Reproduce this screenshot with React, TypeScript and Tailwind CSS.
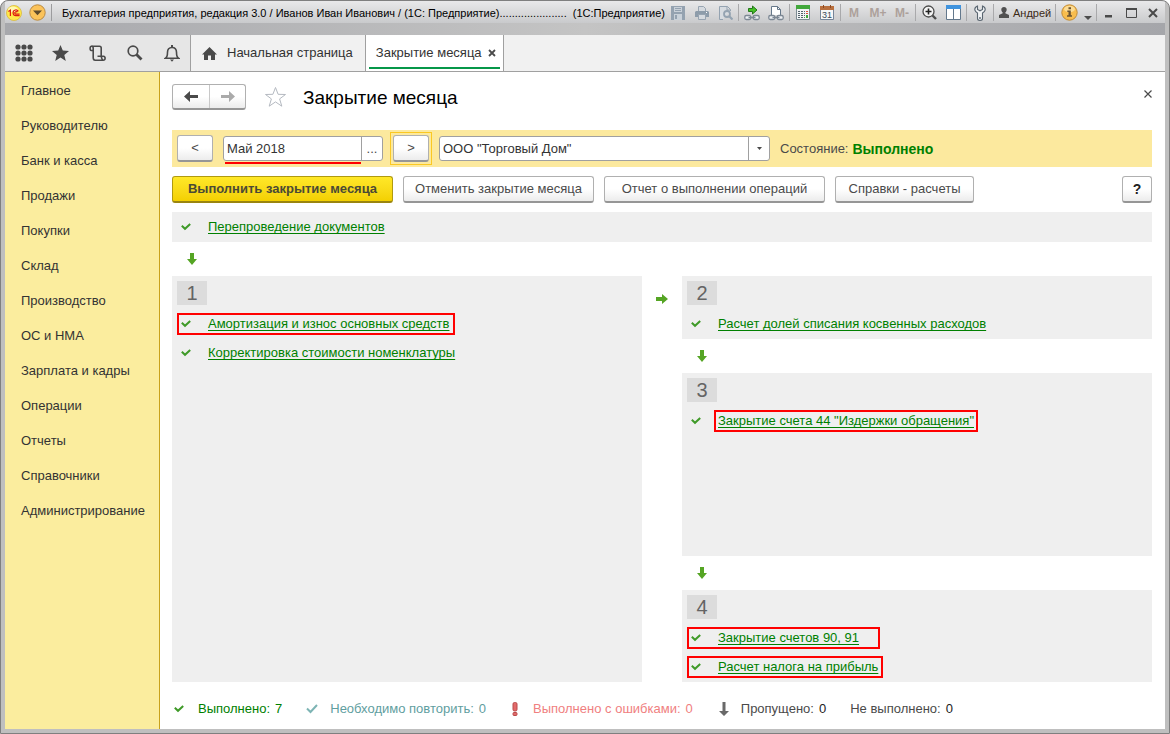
import type { ReactNode } from "react";
import { clsx } from "clsx";

const sections = [
    "Главное",
    "Руководителю",
    "Банк и касса",
    "Продажи",
    "Покупки",
    "Склад",
    "Производство",
    "ОС и НМА",
    "Зарплата и кадры",
    "Операции",
    "Отчеты",
    "Справочники",
    "Администрирование",
];

function Check({ color = "#3f9a28" }: { color?: string }) {
    return (
        <svg width="10" height="8" viewBox="0 0 10 8" fill="none" className="shrink-0">
            <path d="M0.8 2.8 L4 5.8 L9.2 1" stroke={color} strokeWidth="2" />
        </svg>
    );
}

function DownArrow() {
    return (
        <svg width="10" height="12" viewBox="0 0 10 12" className="shrink-0">
            <path d="M3 0h4v6h3L5 12 0 6h3z" fill="#55a524" />
        </svg>
    );
}

function RightArrow() {
    return (
        <svg width="12" height="10" viewBox="0 0 12 10" className="shrink-0">
            <path d="M0 3v4h6v3l6-5-6-5v3z" fill="#55a524" />
        </svg>
    );
}

/* ---------- window caption ---------- */

function Group({ children }: { children: ReactNode }) {
    return <div className="flex h-full shrink-0 items-center border-l border-[#a9a9ab] px-px">{children}</div>;
}

function Tool({ label, children }: { label: string; children: ReactNode }) {
    return (
        <button type="button" aria-label={label} className="flex h-5 w-6 items-center justify-center">
            {children}
        </button>
    );
}

function MemoryButton({ text }: { text: string }) {
    return (
        <button type="button" className="h-5 w-6 text-[12px] leading-5 font-bold text-[#ada19b]">
            {text}
        </button>
    );
}

function ChainLink() {
    return (
        <g fill="none" stroke="#7d8894" strokeWidth="1.3">
            <rect x="0.8" y="10.5" width="6" height="4" rx="1.5" fill="#eef1f4" />
            <rect x="9.2" y="10.5" width="6" height="4" rx="1.5" fill="#eef1f4" />
            <path d="M4.5 12.5h7" />
        </g>
    );
}

function TitleBar() {
    return (
        <header className="bg-linear-to-r from-[#a7a8ac] via-[#c4c4c4] to-[#a5a6aa] pb-3">
            <div className="flex h-[22px] items-center bg-linear-to-b from-[#e9e9ea] to-[#c9cacc] pt-px">
                <svg width="16" height="16" viewBox="0 0 16 16" className="ml-px shrink-0">
                    <circle cx="8" cy="8" r="7.5" fill="#ffe94a" stroke="#d9b93a" strokeWidth="0.8" />
                    <ellipse cx="7" cy="4.5" rx="5" ry="3" fill="#fff8b0" />
                    <path
                        d="M2.4 6.6L4.4 5.2V11M12.3 6.4C11.6 5.2 10.4 4.8 9.4 5C7.8 5.3 6.9 6.6 7.1 8.2C7.3 9.7 8.4 10.6 9.8 10.6H13.6M11.3 7.2C10.8 6.6 9.9 6.4 9.3 6.9C8.5 7.5 8.6 8.9 9.7 9.1H13.6"
                        fill="none"
                        stroke="#dd1c12"
                        strokeWidth="1.2"
                    />
                </svg>
                <button type="button" aria-label="Главное меню" className="ml-[7px] shrink-0">
                    <svg width="17" height="17" viewBox="0 0 17 17">
                        <circle cx="8.5" cy="8.5" r="7.7" fill="#fbc35a" stroke="#ba8a41" />
                        <path d="M4 6.5h9l-4.5 4.8z" fill="#5e4a2c" />
                    </svg>
                </button>
                <div className="ml-[5px] h-[17px] w-px shrink-0 bg-[#9c9c9e]" />
                <div className="ml-[10px] flex min-w-0 flex-1 gap-[6px] overflow-hidden text-[11px] leading-5 whitespace-nowrap text-black">
                    <span>Бухгалтерия предприятия, редакция 3.0 / Иванов Иван Иванович / (1С: Предприятие)......................</span>
                    <span>(1С:Предприятие)</span>
                </div>
                <div className="flex h-[17px] shrink-0 items-center">
                    <Tool label="Сохранить">
                        <svg width="14" height="14" viewBox="0 0 14 14">
                            <path d="M0 0h14v14H0z" fill="#94a2b0" />
                            <path d="M3 1h8v5H3zM3 8h8v6H3z" fill="#c9d1d9" />
                            <path d="M4 2h6v1H4zM4 4h6v1H4zM4 9h2v4H4z" fill="#94a2b0" />
                        </svg>
                    </Tool>
                    <Tool label="Печать">
                        <svg width="14" height="14" viewBox="0 0 14 14">
                            <path d="M3.5 5V.5h5l2 2V5" fill="#d5dadf" stroke="#97a4b1" />
                            <path d="M1 5h12l1 1v5H0V6z" fill="#8d9caa" />
                            <path d="M3.5 8.5h7v5h-7z" fill="#d5dadf" stroke="#97a4b1" />
                            <path d="M11 6h1v1h-1z" fill="#fff" />
                        </svg>
                    </Tool>
                    <Tool label="Предварительный просмотр">
                        <svg width="14" height="14" viewBox="0 0 14 14" fill="none" stroke="#94a3b1">
                            <path d="M4 13.5H.5V.5h8l3 3V5M8 .5V4h3" fill="#d7dce1" />
                            <circle cx="8" cy="8" r="3" strokeWidth="1.8" />
                            <path d="M10 10l3.5 3.5" strokeWidth="2.2" />
                        </svg>
                    </Tool>
                    <Group>
                        <Tool label="Перейти по ссылке">
                            <svg width="16" height="16" viewBox="0 0 16 16">
                                <ChainLink />
                                <path d="M4.5 3.5h4V1l4.5 4-4.5 4V6.5h-4z" fill="#45c126" stroke="#23771a" />
                            </svg>
                        </Tool>
                        <Tool label="Получить ссылку">
                            <svg width="16" height="16" viewBox="0 0 16 16">
                                <path d="M3.5 10V1.5h6l3 3V10" fill="#fff" stroke="#66788a" />
                                <path d="M9.5 1.5v3h3" fill="none" stroke="#66788a" />
                                <ChainLink />
                            </svg>
                        </Tool>
                    </Group>
                    <Group>
                        <Tool label="Калькулятор">
                            <svg width="14" height="15" viewBox="0 0 14 15">
                                <path d="M.5.5h13v14H.5z" fill="#f2f4f6" stroke="#7c8b92" />
                                <path d="M0 0h14v4H0z" fill="#42a83c" />
                                <path d="M2 6h2v1H2zM5 6h2v1H5zM8 6h1v1H8zM2 8h2v1H2zM5 8h2v1H5zM8 8h1v1H8zM2 10h2v1H2zM5 10h2v1H5zM8 10h1v1H8zM2 12h2v1H2zM5 12h2v1H5z" fill="#54636d" />
                                <path d="M10 6h2v1h-2zM10 8h2v1h-2z" fill="#dc4b3b" />
                                <path d="M10 10h2v3h-2zM8 12h1v1H8z" fill="#42a83c" />
                            </svg>
                        </Tool>
                        <Tool label="Календарь">
                            <svg width="14" height="15" viewBox="0 0 14 15">
                                <path d="M.5 1.5h13v13H.5z" fill="#f6f7f8" stroke="#76859a" />
                                <path d="M0 1h14v4H0z" fill="#b96f3d" />
                                <path d="M3 0h1v3H3zM10 0h1v3h-1z" fill="#8b4a22" />
                                <text x="7" y="13" textAnchor="middle" fontSize="9" fill="#3c4958">
                                    31
                                </text>
                            </svg>
                        </Tool>
                    </Group>
                    <Group>
                        <MemoryButton text="M" />
                        <MemoryButton text="M+" />
                        <MemoryButton text="M-" />
                    </Group>
                    <Group>
                        <Tool label="Масштаб">
                            <svg width="15" height="15" viewBox="0 0 15 15" fill="none">
                                <circle cx="6.5" cy="6.5" r="5.5" fill="#f4f4f4" stroke="#4c4c4c" strokeWidth="1.3" />
                                <path d="M3.5 6.5h6M6.5 3.5v6" stroke="#222" strokeWidth="1.6" />
                                <path d="M10.5 10.5l3.5 3.5" stroke="#4c4c4c" strokeWidth="2.4" />
                            </svg>
                        </Tool>
                        <Tool label="Панели">
                            <svg width="15" height="15" viewBox="0 0 15 15">
                                <path d="M.5.5h14v14H.5z" fill="#fff" stroke="#63788c" />
                                <path d="M0 0h15v4H0z" fill="#3f93de" />
                                <path d="M7 4h1v10H7z" fill="#63788c" />
                            </svg>
                        </Tool>
                    </Group>
                    <Group>
                        <Tool label="Сервис">
                            <svg width="12" height="16" viewBox="0 0 12 16">
                                <path
                                    d="M3.5 1C1.3 1.8.6 3.6.9 5.2c.3 1.4 1.3 2.2 2.6 2.7v5.6c0 2.6 5 2.6 5 0V7.9c1.3-.5 2.3-1.3 2.6-2.7C11.4 3.6 10.7 1.8 8.5 1v3.5L6 5.8 3.5 4.5z"
                                    fill="#f0f2f4"
                                    stroke="#596570"
                                    strokeWidth="1.1"
                                />
                                <circle cx="6" cy="13" r="0.9" fill="#596570" />
                            </svg>
                        </Tool>
                    </Group>
                    <Group>
                        <button type="button" className="flex h-5 w-[59px] items-center gap-1 pl-1 text-[11px] leading-5 text-[#3b2a16]">
                            <svg width="10" height="11" viewBox="0 0 10 11" className="shrink-0">
                                <path d="M5 0c1.7 0 2.7 1 2.7 2.6 0 1.4-.7 2.4-1.4 2.9v.8L10 8v3H0V8l3.7-1.7v-.8C3 5 2.3 4 2.3 2.6 2.3 1 3.3 0 5 0z" fill="#505050" />
                            </svg>
                            Андрей
                        </button>
                    </Group>
                    <Group>
                        <Tool label="Информация">
                            <svg width="17" height="17" viewBox="0 0 17 17" className="shrink-0">
                                <circle cx="8.5" cy="8.5" r="7.7" fill="#f8bd4e" stroke="#c08a35" />
                                <ellipse cx="8.5" cy="5" rx="5.5" ry="3.2" fill="#fcdc94" />
                                <path d="M7.5 3.3h2.500v2H7.500zM6.300 6.500h3.500v4.800h1.200v1.400H6v-1.400h1.500V7.900H6.300z" fill="#6b5433" />
                            </svg>
                        </Tool>
                        <button type="button" aria-label="Ещё" className="flex h-5 w-[14px] items-end justify-center pb-[3px]">
                            <svg width="8" height="4" viewBox="0 0 8 4">
                                <path d="M0 0h8L4 4z" fill="#4d4d4d" />
                            </svg>
                        </button>
                    </Group>
                    <Group>
                        <button type="button" aria-label="Свернуть" className="flex h-5 w-[22px] items-center justify-center">
                            <svg width="8" height="12" viewBox="0 0 8 12">
                                <path d="M0 8h7v2.500H0z" fill="#4a4a4a" />
                            </svg>
                        </button>
                        <button type="button" aria-label="Развернуть" className="flex h-5 w-[22px] items-center justify-center">
                            <svg width="11" height="10" viewBox="0 0 11 10">
                                <path d="M.5 1h10v8.500H.5z" fill="none" stroke="#4a4a4a" />
                                <path d="M0 0h11v2H0z" fill="#4a4a4a" />
                            </svg>
                        </button>
                        <button type="button" aria-label="Закрыть" className="flex h-5 w-[22px] items-center justify-center">
                            <svg width="10" height="10" viewBox="0 0 10 10">
                                <path d="M1 1l8 8M9 1L1 9" stroke="#4a4a4a" strokeWidth="2" />
                            </svg>
                        </button>
                    </Group>
                </div>
            </div>
        </header>
    );
}

/* ---------- tabs ---------- */

function PanelButton({ label, children }: { label: string; children: ReactNode }) {
    return (
        <button type="button" aria-label={label} className="flex w-[37px] items-center justify-center">
            {children}
        </button>
    );
}

function TabBar() {
    return (
        <div className="flex h-[37px] border-b border-[#a0a0a0] bg-[#f1f1f1]">
            <div className="flex bg-[#e6e6e6]">
                <PanelButton label="Меню функций">
                    <svg width="18" height="18" viewBox="0 0 18 18" fill="#4a4a4a">
                        {[3, 9, 15].map((y) => [3, 9, 15].map((x) => <circle key={`${x}-${y}`} cx={x} cy={y} r="2.6" />))}
                    </svg>
                </PanelButton>
                <PanelButton label="Избранное">
                    <svg width="17" height="16" viewBox="0 0 17 16">
                        <path d="M8.5 0l2.300 5.600 6.200.4-4.700 3.900 1.500 6.100-5.300-3.400L3.200 16l1.500-6.100L0 6l6.200-.4z" fill="#4a4a4a" />
                    </svg>
                </PanelButton>
                <PanelButton label="История">
                    <svg width="17" height="17" viewBox="0 0 17 17" fill="none" stroke="#4a4a4a" strokeWidth="1.6">
                        <path d="M4 5.500H2.200C.7 5.500.7 1.300 2.500 1.300H10.500c1.200 0 1.700.8 1.700 1.800v7.900" />
                        <path d="M2.500 1.300c1.200 0 1.700.8 1.700 1.800v9.500c0 1.700.8 2.700 2 2.700h8" />
                        <path d="M8.500 11.300h6c2.200 0 2.200 4-.3 4-1.700 0-1.200-2.300-2-4" />
                    </svg>
                </PanelButton>
                <PanelButton label="Поиск">
                    <svg width="16" height="16" viewBox="0 0 16 16" fill="none" stroke="#4a4a4a">
                        <circle cx="6" cy="6" r="4.8" strokeWidth="1.7" />
                        <path d="M9.500 9.500l5 5" strokeWidth="2.8" />
                    </svg>
                </PanelButton>
                <PanelButton label="Оповещения">
                    <svg width="16" height="17" viewBox="0 0 16 17">
                        <path d="M1.500 13.300c2-1.200 2-2.800 2-6 0-2.800 1.500-4.800 4.500-4.800s4.500 2 4.500 4.800c0 3.200 0 4.800 2 6z" fill="none" stroke="#4a4a4a" strokeWidth="1.6" />
                        <path d="M7 0h2v2.500H7zM6 14.500h4L8 16.800z" fill="#4a4a4a" />
                    </svg>
                </PanelButton>
            </div>
            <nav className="flex">
                <a href="#home" className="flex items-center gap-[10px] border-x border-[#a0a0a0] pr-3 pl-[11px] text-[#333]">
                    <svg width="15" height="13" viewBox="0 0 15 13" className="shrink-0">
                        <path d="M7.500 0L15 7.500h-2V13H9V8.500H6V13H2V7.500H0z" fill="#4a4a4a" />
                    </svg>
                    Начальная страница
                </a>
                <div className="flex flex-col border-r border-[#a0a0a0] bg-white px-[3px] pb-[2px]">
                    <div className="flex flex-1 items-center gap-[6px] border-b-2 border-[#059748] pt-1 pr-1 pl-[7px]">
                        <a href="#closing" className="text-[#333]">
                            Закрытие месяца
                        </a>
                        <button type="button" aria-label="Закрыть вкладку">
                            <svg width="8" height="8" viewBox="0 0 8 8">
                                <path d="M1 1l6 6M7 1L1 7" stroke="#4a4a4a" strokeWidth="1.8" />
                            </svg>
                        </button>
                    </div>
                </div>
            </nav>
        </div>
    );
}

/* ---------- form ---------- */

function FormButton({ className, children }: { className?: string; children: ReactNode }) {
    return (
        <button
            type="button"
            className={clsx(
                "h-[27px] shrink-0 rounded-[3px] border border-b-2 border-[#b0b0b0] border-b-[#969696] bg-linear-to-b from-white from-50% to-[#ececec] leading-4 whitespace-nowrap text-[#4a4a4a]",
                className,
            )}
        >
            {children}
        </button>
    );
}

function Operation({ title, marked, className }: { title: string; marked?: "row" | "link"; className?: string }) {
    return (
        <div className="flex h-[29px] items-center pl-[5px]">
            <div className={clsx("flex h-[22px] items-center border-2 pl-[2px]", marked === "row" ? "border-[#ff0000]" : "border-transparent", className)}>
                <Check />
                <div className={clsx("ml-[13px] flex h-[22px] items-center border-2 pl-[2px]", marked === "link" ? "border-[#ff0000] pr-[2px]" : "border-transparent")}>
                    <a href="#operation" className="leading-4 whitespace-nowrap text-[#008000] underline decoration-1 underline-offset-2 [text-decoration-skip-ink:none]">
                        {title}
                    </a>
                </div>
            </div>
        </div>
    );
}

function Stage({ number, className, children }: { number: number; className?: string; children: ReactNode }) {
    return (
        <section className={clsx("bg-[#efefef] pt-[5px] pb-px", className)}>
            <div className="mb-1 ml-[5px] flex h-6 w-[30px] items-center justify-center bg-[#dcdcdc] text-[20px] leading-6 text-[#646464]">
                {number}
            </div>
            {children}
        </section>
    );
}

function StageGap() {
    return (
        <div className="flex h-[34px] shrink-0 items-center pl-[15px]">
            <DownArrow />
        </div>
    );
}

function Counter({ label, value, className, valueClassName }: { label: string; value: number; className: string; valueClassName?: string }) {
    return (
        <span className={clsx("flex gap-[5px] whitespace-nowrap", className)}>
            <span>{label}</span>
            <span className={valueClassName}>{value}</span>
        </span>
    );
}

function ClosingForm() {
    return (
        <main className="flex min-w-0 flex-1 flex-col bg-white pr-[13px] pl-3">
            <div className="flex h-[58px] items-start pt-3">
                <div className="flex h-[26px] rounded-[3px] border border-b-2 border-[#b0b0b0] border-b-[#969696] bg-linear-to-b from-white from-50% to-[#ececec]">
                    <button type="button" aria-label="Назад" className="flex w-[37px] items-center justify-center border-r border-[#c8c8c8]">
                        <svg width="14" height="11" viewBox="0 0 14 11">
                            <path d="M0 5.500L6 0v4h8v3H6v4z" fill="#4a4a4a" />
                        </svg>
                    </button>
                    <button type="button" aria-label="Вперед" className="flex w-[35px] items-center justify-center">
                        <svg width="14" height="11" viewBox="0 0 14 11">
                            <path d="M14 5.500L8 0v4H0v3h8v4z" fill="#aaa" />
                        </svg>
                    </button>
                </div>
                <button type="button" aria-label="В избранное" className="ml-[18px] pt-[2px]">
                    <svg width="23" height="22" viewBox="0 0 23 22">
                        <path d="M11.500 1.500l2.600 6.800 7.400.2-5.900 4.400 2.200 7.300-6.300-4.300-6.300 4.300 2.200-7.300L1.500 8.500l7.400-.2z" fill="#fff" stroke="#b4b9c0" />
                    </svg>
                </button>
                <h1 className="ml-4 pt-[2px] text-[19px] leading-6 text-black">Закрытие месяца</h1>
                <button type="button" aria-label="Закрыть" className="ml-auto pt-[6px]">
                    <svg width="8" height="8" viewBox="0 0 8 8">
                        <path d="M.5.5l7 7M7.500.5l-7 7" stroke="#4a4a4a" strokeWidth="1.2" />
                    </svg>
                </button>
            </div>

            <div className="flex h-[37px] shrink-0 items-center bg-[#fce99e] px-[5px] text-[#333]">
                <FormButton className="w-9">&lt;</FormButton>
                <div className="relative ml-[10px] flex h-[25px] w-40 rounded-[3px] border border-[#a0a0a0] bg-white">
                    <input aria-label="Период" defaultValue="Май 2018" className="w-0 min-w-0 flex-1 bg-transparent pl-[3px] outline-none" />
                    <button type="button" className="w-[21px] border-l border-[#a0a0a0] text-[#4a4a4a]">
                        ...
                    </button>
                    <span className="absolute -bottom-[4px] left-px h-[2px] w-[136px] bg-[#ff0000]" />
                </div>
                <div className="ml-[7px] flex h-[33px] items-center border border-[#fbc822] px-[2px]">
                    <FormButton className="w-9">&gt;</FormButton>
                </div>
                <div className="relative ml-[7px] h-[25px] w-[331px]">
                    <select aria-label="Организация" className="h-full w-full appearance-none rounded-[3px] border border-[#a0a0a0] bg-white pr-6 pl-[3px] outline-none">
                        <option>ООО "Торговый Дом"</option>
                    </select>
                    <span className="pointer-events-none absolute inset-y-0 right-0 flex w-[22px] items-center justify-center border-l border-[#a0a0a0]">
                        <svg width="5" height="3" viewBox="0 0 5 3">
                            <path d="M0 0h5L2.500 3z" fill="#4a4a4a" />
                        </svg>
                    </span>
                </div>
                <span className="ml-[10px] text-[#4a4a4a]">Состояние:</span>
                <span className="ml-1 text-[14px] font-bold text-[#008000]">Выполнено</span>
            </div>

            <div className="flex gap-[10px] py-[9px]">
                <button
                    type="button"
                    className="h-[27px] w-[221px] shrink-0 rounded-[3px] border border-b-2 border-[#b09a10] border-b-[#9a8510] bg-linear-to-b from-[#ffe827] to-[#f3d000] leading-4 font-bold whitespace-nowrap text-[#4a4a35]"
                >
                    Выполнить закрытие месяца
                </button>
                <FormButton className="w-[191px]">Отменить закрытие месяца</FormButton>
                <FormButton className="w-[221px]">Отчет о выполнении операций</FormButton>
                <FormButton className="w-[139px]">Справки - расчеты</FormButton>
                <FormButton className="ml-auto w-[30px] text-[14px] font-bold text-[#222]">?</FormButton>
            </div>

            <div className="bg-[#efefef] pb-px">
                <Operation title="Перепроведение документов" />
            </div>
            <StageGap />

            <div className="flex flex-1">
                <Stage number={1} className="flex-1">
                    <Operation title="Амортизация и износ основных средств" marked="row" className="w-[278px]" />
                    <Operation title="Корректировка стоимости номенклатуры" />
                </Stage>
                <div className="flex w-10 shrink-0 justify-center pt-[18px]">
                    <RightArrow />
                </div>
                <div className="flex flex-1 flex-col">
                    <Stage number={2}>
                        <Operation title="Расчет долей списания косвенных расходов" />
                    </Stage>
                    <StageGap />
                    <Stage number={3} className="flex-1">
                        <Operation title={'Закрытие счета 44 "Издержки обращения"'} marked="link" />
                    </Stage>
                    <StageGap />
                    <Stage number={4}>
                        <Operation title="Закрытие счетов 90, 91" marked="row" className="w-[193px]" />
                        <Operation title="Расчет налога на прибыль" marked="row" className="w-[196px]" />
                    </Stage>
                </div>
            </div>

            <footer className="flex h-[47px] shrink-0 items-center pt-[6px] pl-[2px]">
                <Check />
                <Counter label="Выполнено:" value={7} className="ml-[14px] text-[#008000]" />
                <svg width="12" height="10" viewBox="0 0 12 10" fill="none" className="ml-6 shrink-0">
                    <path d="M1 4.500L4.500 8 11 1" stroke="#7db4b4" strokeWidth="2" />
                </svg>
                <Counter label="Необходимо повторить:" value={0} className="ml-3 text-[#5f9ea0]" />
                <svg width="6" height="14" viewBox="0 0 6 14" className="ml-[26px] shrink-0">
                    <rect x="1" y="0.500" width="4" height="8.500" rx="1.500" fill="#e26a6a" stroke="#b84a4a" />
                    <rect x="1" y="10.500" width="4" height="3" rx="1" fill="#e26a6a" stroke="#b84a4a" />
                </svg>
                <Counter label="Выполнено с ошибками:" value={0} className="ml-[15px] text-[#f08080]" />
                <svg width="10" height="14" viewBox="0 0 10 14" className="ml-[26px] shrink-0">
                    <path d="M3.500 0h3v9H10l-5 5-5-5h3.500z" fill="#696969" />
                </svg>
                <Counter label="Пропущено:" value={0} className="ml-3 text-[#4a4a4a]" valueClassName="text-[#222]" />
                <Counter label="Не выполнено:" value={0} className="ml-6 text-[#4a4a4a]" valueClassName="text-[#222]" />
            </footer>
        </main>
    );
}

export default function App() {
    return (
        <div className="flex min-h-screen flex-col rounded-t-lg border border-[#7f7f7f] bg-[#bfbfbf] font-['Liberation_Sans',sans-serif] text-[13px] leading-4">
            <div className="flex flex-1 flex-col overflow-hidden rounded-t-lg px-1 pb-1">
                <TitleBar />
                <TabBar />
                <div className="flex flex-1">
                    <nav className="w-[155px] shrink-0 border-r border-[#c9a21b] bg-[#fbed9e] pt-px">
                        {sections.map((name) => (
                            <a key={name} href="#section" className="flex h-[35px] items-center pl-4 text-[#333]">
                                {name}
                            </a>
                        ))}
                    </nav>
                    <ClosingForm />
                </div>
            </div>
        </div>
    );
}
